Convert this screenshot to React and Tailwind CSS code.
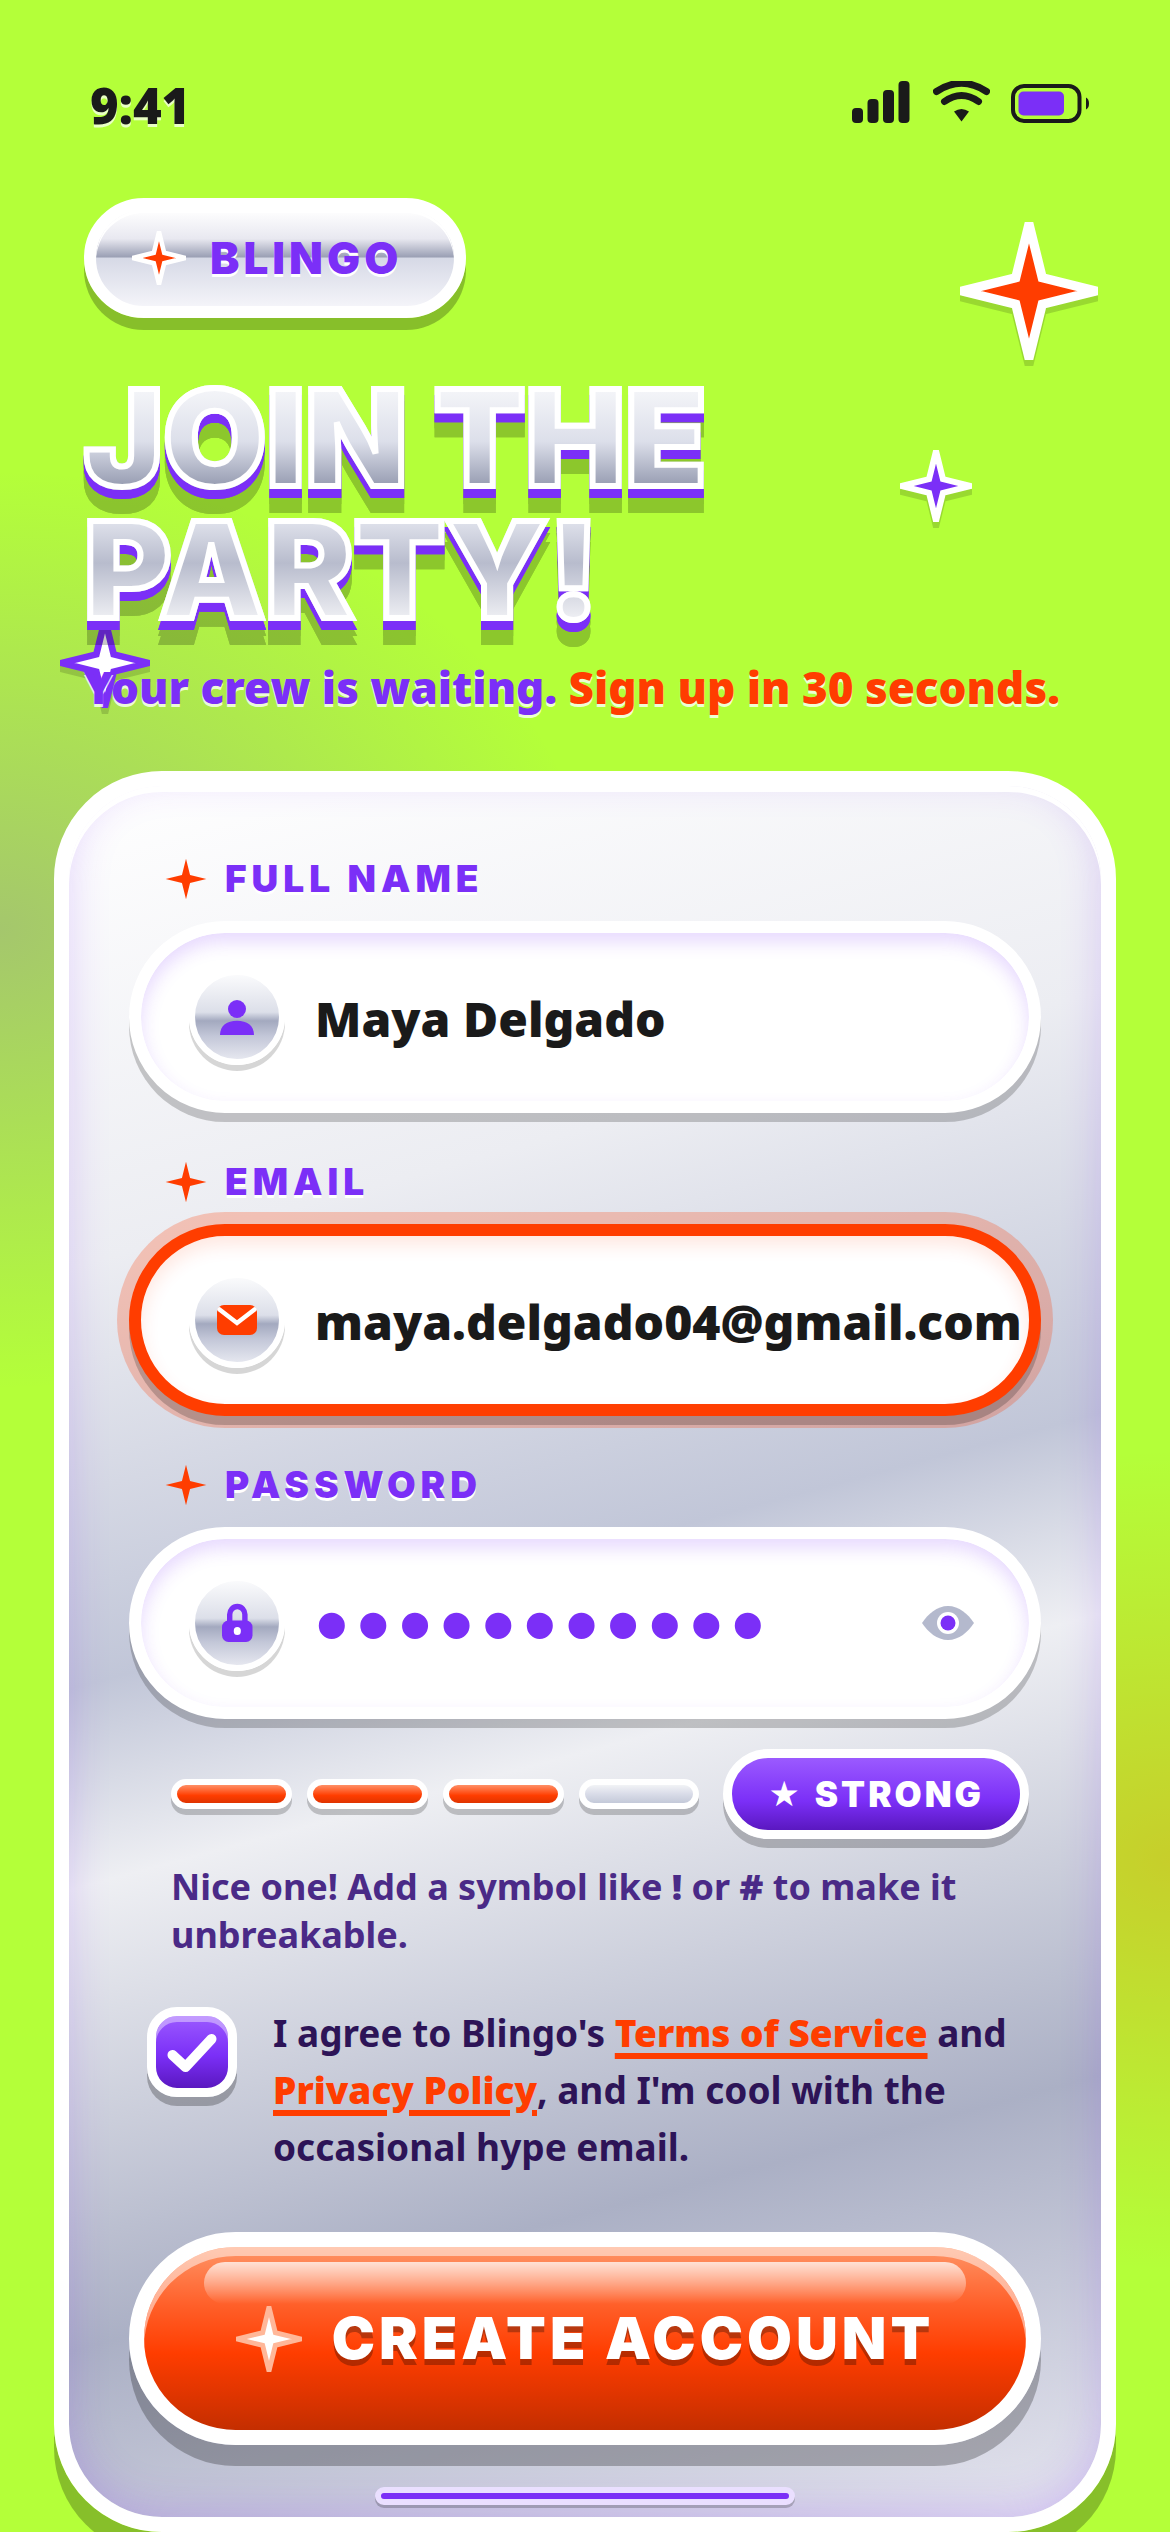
import React, { useState } from "react";

const STAR = "M50 1.5 L59.6 40.4 L98.5 50 L59.6 59.6 L50 98.5 L40.4 59.6 L1.5 50 L40.4 40.4 Z";

function Sparkle({ className, fill, stroke, strokeWidth = 0 }) {
  return (
    <svg viewBox="0 0 100 100" className={className} aria-hidden="true">
      <path
        d={STAR}
        fill={fill}
        stroke={stroke}
        strokeWidth={strokeWidth}
        strokeMiterlimit="10"
      />
    </svg>
  );
}

function StatusBar() {
  return (
    <div className="flex items-start justify-between pl-[90px] pr-[81px] pt-[69px]">
      <span className="text-[49px] leading-[72px] font-black text-[#1a1a1a] [text-shadow:0_3px_0_rgba(255,255,255,0.7)]">
        9:41
      </span>
      <div className="flex items-end gap-[21px] pt-3 text-[#1a1a1a]">
        <svg width="60" height="42" viewBox="0 0 60 42" fill="currentColor">
          <rect x="0" y="27" width="11" height="15" rx="4" />
          <rect x="15.5" y="18" width="11" height="24" rx="4" />
          <rect x="31" y="9" width="11" height="33" rx="4" />
          <rect x="46.5" y="0" width="11" height="42" rx="4" />
        </svg>
        <svg width="57" height="42" viewBox="0 0 57 42" fill="none">
          <g stroke="currentColor" strokeWidth="7" strokeLinecap="round">
            <path d="M3.5 10.5Q28.5-6 53.5 10.5" />
            <path d="M11.5 20.5Q28.5 8.5 45.5 20.5" />
          </g>
          <path
            d="M21 30.5Q28.5 25.5 36 30.5L28.5 40.5Z"
            fill="currentColor"
          />
        </svg>
        <svg width="78" height="39" viewBox="0 0 78 39" fill="none">
          <rect
            x="2"
            y="2"
            width="66.5"
            height="35"
            rx="11"
            stroke="currentColor"
            strokeWidth="4"
          />
          <rect x="7.5" y="7.5" width="45.5" height="24" rx="5" fill="#7b2ff7" />
          <path d="M75 13.5Q78 15 78 19.5T75 25.5Z" fill="currentColor" />
        </svg>
      </div>
    </div>
  );
}

function UserIcon() {
  return (
    <svg width="48" height="48" viewBox="0 0 48 48" fill="#7b2ff7">
      <circle cx="24" cy="16" r="9" />
      <path d="M7 42C7 32.5 14 27.7 24 27.7S41 32.5 41 42Z" />
    </svg>
  );
}

function MailIcon() {
  return (
    <svg width="48" height="48" viewBox="0 0 48 48" fill="none">
      <rect x="4" y="9" width="40" height="30" rx="7" fill="#ff3d00" />
      <path
        d="M6.5 13.5L24 27L41.5 13.5"
        stroke="#fff"
        strokeWidth="4.5"
        strokeLinecap="round"
      />
    </svg>
  );
}

function LockIcon() {
  return (
    <svg width="48" height="48" viewBox="0 0 48 48" fill="none">
      <path
        d="M16.7 23V15.5a7.6 8 0 0 1 15.2 0V23"
        stroke="#7b2ff7"
        strokeWidth="5.4"
      />
      <rect x="9" y="21.5" width="30.5" height="21.5" rx="6.5" fill="#7b2ff7" />
      <rect x="20.8" y="28" width="7" height="8" rx="3.5" fill="#fff" />
    </svg>
  );
}

function EyeIcon() {
  return (
    <svg width="66" height="66" viewBox="0 0 66 66">
      <path
        d="M7 33C13 24 22 16 33 16S53 24 59 33C53 42 44 50 33 50S13 42 7 33Z"
        fill="#b4b9cd"
      />
      <circle cx="33" cy="33" r="11" fill="#fff" />
      <circle cx="33" cy="33" r="7.5" fill="#7b2ff7" />
    </svg>
  );
}

function Field({ id, label, icon, active, children }) {
  return (
    <div>
      <label
        htmlFor={id}
        className="mb-[15px] ml-9 flex h-[54px] items-center gap-[18px] font-['Inter','Noto_Sans',sans-serif] text-[37px] leading-[54px] font-black tracking-[5px] text-[#7b2ff7] uppercase [text-shadow:0_3px_0_#fff]"
      >
        <Sparkle className="size-[42px]" fill="#ff3d00" />
        {label}
      </label>
      <div
        className={
          "flex h-48 items-center rounded-full border-12 bg-white pl-12 " +
          (active
            ? "border-[#ff3d00] shadow-[0_9px_0_rgba(0,0,0,0.2),0_0_0_12px_rgba(255,61,0,0.25),inset_0_9px_18px_rgba(255,61,0,0.12)]"
            : "border-white shadow-[0_9px_0_rgba(0,0,0,0.2),inset_0_9px_18px_rgba(123,47,247,0.18)]")
        }
      >
        <span className="mr-[30px] flex size-24 shrink-0 items-center justify-center rounded-full border-6 border-white bg-[linear-gradient(180deg,#fff_0%,#dcdfe9_45%,#a3a9bf_54%,#c3c7d8_70%,#eeeff5_100%)] bg-origin-border shadow-[0_6px_0_rgba(0,0,0,0.16)]">
          {icon}
        </span>
        {children}
      </div>
    </div>
  );
}

const inputClass =
  "min-w-0 flex-1 bg-transparent pt-1 text-[48px] leading-[72px] font-black text-[#1a1a1a] outline-none";

function StrengthBar({ on }) {
  return (
    <span
      className={
        "h-[30px] flex-1 rounded-full border-6 border-white bg-origin-border shadow-[0_6px_0_rgba(0,0,0,0.2)] " +
        (on
          ? "bg-[linear-gradient(180deg,#ff8f66_20%,#ff3d00_55%,#d93200_85%)]"
          : "bg-[linear-gradient(180deg,#f2f3f6_20%,#d9dce8_50%,#c0c6d6_85%)]")
      }
    />
  );
}

export default function App() {
  const [name, setName] = useState("Maya Delgado");
  const [email, setEmail] = useState("maya.delgado04@gmail.com");
  const [password, setPassword] = useState("partytime22");
  const [showPassword, setShowPassword] = useState(false);
  const [agreed, setAgreed] = useState(true);

  return (
    <div className="relative min-h-screen overflow-hidden bg-[#b4ff39] bg-[radial-gradient(600px_460px_at_0_930px,rgba(123,47,247,0.27),rgba(123,47,247,0)),radial-gradient(500px_410px_at_100%_1860px,rgba(255,61,0,0.25),rgba(255,61,0,0))] font-['Noto_Sans','Open_Sans',sans-serif]">
      {/* floating sparkles */}
      <Sparkle
        className="absolute top-[222px] right-[72px] size-[138px] drop-shadow-[0_6px_0_rgba(0,0,0,0.15)]"
        fill="#ff3d00"
        stroke="#fff"
        strokeWidth={6.7}
      />
      <Sparkle
        className="absolute top-[450px] right-[198px] size-[72px] drop-shadow-[0_6px_0_rgba(0,0,0,0.15)]"
        fill="#7b2ff7"
        stroke="#fff"
        strokeWidth={8.4}
      />
      <Sparkle
        className="absolute top-[618px] left-[60px] size-[90px] drop-shadow-[0_6px_0_rgba(0,0,0,0.15)]"
        fill="#fff"
        stroke="#7b2ff7"
        strokeWidth={7.4}
      />

      <StatusBar />

      <header className="relative px-[84px] pt-[57px]">
        <div className="inline-flex h-[120px] items-center gap-6 rounded-full border-12 border-white bg-[linear-gradient(180deg,#fff_0%,#e8e8f0_30%,#9a9fb4_49%,#d6d9e6_50%,#f4f4f9_100%)] pr-[52px] pl-9 align-top font-['Inter','Noto_Sans',sans-serif] text-[44px] font-black tracking-[4px] text-[#7b2ff7] shadow-[0_12px_0_rgba(0,0,0,0.25),inset_0_3px_0_#fff] [text-shadow:0_3px_0_#fff]">
          <Sparkle
            className="size-[54px]"
            fill="#ff3d00"
            stroke="#fff"
            strokeWidth={8.4}
          />
          BLINGO
        </div>
        <h1 className="mt-12 bg-[linear-gradient(180deg,#fff_0%,#dcdfea_28%,#9096ac_46%,#e8eaf2_54%,#b8bccd_73%,#fff_100%)] bg-clip-text pt-[6px] font-['Inter','Noto_Sans',sans-serif] text-[133px] leading-[132px] font-black text-transparent uppercase [-webkit-text-stroke:6px_#fff] [filter:drop-shadow(0_9px_0_#7b2ff7)_drop-shadow(0_15px_0_rgba(0,0,0,0.22))]">
          Join the
          <br />
          party!
        </h1>
        <p className="mt-[21px] text-[44px] leading-[60px] font-black whitespace-nowrap text-[#7b2ff7] [text-shadow:0_3px_0_rgba(255,255,255,0.8)]">
          Your crew is waiting.{" "}
          <span className="text-[#ff3d00]">Sign up in 30 seconds.</span>
        </p>
      </header>

      <form
        onSubmit={(e) => e.preventDefault()}
        className="relative mx-[54px] mt-[54px] rounded-[108px] border-15 border-white bg-[linear-gradient(165deg,#fff_0%,#ecedf2_24%,#c1c6d8_45%,#eeeff3_55%,#abb0c5_78%,#e6e6f0_100%)] px-[60px] pt-[66px] pb-[72px] shadow-[0_24px_0_rgba(0,0,0,0.25),inset_0_6px_0_#fff,inset_0_-9px_42px_rgba(123,47,247,0.2)]"
      >
        <div className="flex flex-col gap-[42px]">
          <Field id="name" label="Full name" icon={<UserIcon />}>
            <input
              id="name"
              type="text"
              value={name}
              onChange={(e) => setName(e.target.value)}
              className={inputClass}
            />
          </Field>
          <Field id="email" label="Email" icon={<MailIcon />} active>
            <input
              id="email"
              type="email"
              value={email}
              onChange={(e) => setEmail(e.target.value)}
              className={inputClass}
            />
          </Field>
          <Field id="password" label="Password" icon={<LockIcon />}>
            <input
              id="password"
              type={showPassword ? "text" : "password"}
              value={password}
              onChange={(e) => setPassword(e.target.value)}
              className="min-w-0 flex-1 bg-transparent pt-1 font-['Liberation_Sans',sans-serif] text-[96px] leading-[96px] tracking-[8px] text-[#7b2ff7] outline-none"
            />
            <button
              type="button"
              aria-label="Show password"
              onClick={() => setShowPassword(!showPassword)}
              className="mr-12 shrink-0"
            >
              <EyeIcon />
            </button>
          </Field>
        </div>

        {/* password strength */}
        <div className="mt-[30px] flex items-center gap-6 pr-3 pl-[42px]">
          <div className="flex flex-1 gap-[15px]">
            <StrengthBar on />
            <StrengthBar on />
            <StrengthBar on />
            <StrengthBar />
          </div>
          <div className="flex h-[90px] items-center gap-3 rounded-full border-9 border-white bg-[linear-gradient(180deg,#9b5aff_0%,#7b2ff7_60%,#5a18c0_100%)] px-9 font-['Inter','Noto_Sans',sans-serif] text-[35px] font-black tracking-[3px] text-white shadow-[0_9px_0_rgba(0,0,0,0.22)]">
            <span className="font-['DejaVu_Sans',sans-serif]">★</span>
            STRONG
          </div>
        </div>
        <p className="mt-6 pr-9 pl-[42px] text-[36px] leading-12 font-bold text-[#4a2a87]">
          Nice one! Add a symbol like <b className="font-black">!</b> or{" "}
          <b className="font-black">#</b> to make it unbreakable.
        </p>

        <div className="mt-[45px] flex gap-9 pl-[18px]">
          <div className="relative mt-[3px] size-[90px] shrink-0">
            <input
              id="agree"
              type="checkbox"
              checked={agreed}
              onChange={(e) => setAgreed(e.target.checked)}
              className="size-full appearance-none rounded-[30px] border-9 border-white bg-[linear-gradient(180deg,#9b5aff_0%,#7b2ff7_55%,#5a18c0_100%)] shadow-[0_9px_0_rgba(0,0,0,0.25),inset_0_6px_0_rgba(255,255,255,0.4)]"
            />
            {agreed && (
              <svg
                viewBox="0 0 90 90"
                fill="none"
                className="pointer-events-none absolute inset-0"
              >
                <path
                  d="M25.5 48L38.5 60L64.5 32"
                  stroke="#fff"
                  strokeWidth="10"
                  strokeLinecap="round"
                  strokeLinejoin="round"
                />
              </svg>
            )}
          </div>
          <label
            htmlFor="agree"
            className="text-[37px] leading-[57px] font-bold text-[#2d1457]"
          >
            I agree to Blingo's{" "}
            <a
              href="#terms"
              className="font-black text-[#ff3d00] underline decoration-6 underline-offset-6"
            >
              Terms of Service
            </a>{" "}
            and{" "}
            <a
              href="#privacy"
              className="font-black text-[#ff3d00] underline decoration-6 underline-offset-6"
            >
              Privacy Policy
            </a>
            , and I'm cool with the occasional hype email.
          </label>
        </div>

        <button
          type="submit"
          className="relative mt-[57px] flex h-[213px] w-full items-center justify-center gap-[30px] rounded-full border-15 border-white bg-[linear-gradient(180deg,#ff9466_0%,#ff5f29_32%,#ff3d00_58%,#c42e00_100%)] font-['Inter','Noto_Sans',sans-serif] text-[58px] font-black tracking-[4px] text-white shadow-[0_21px_0_rgba(0,0,0,0.25),inset_0_9px_0_rgba(255,255,255,0.5)] [text-shadow:0_6px_0_rgba(0,0,0,0.28)]"
        >
          <span className="absolute inset-x-[60px] top-[15px] h-[42px] rounded-full bg-linear-to-b from-white/75 to-white/0" />
          <Sparkle
            className="size-[66px]"
            fill="#fff"
            stroke="#ffb799"
            strokeWidth={7.4}
          />
          CREATE ACCOUNT
        </button>
      </form>

      {/* home indicator */}
      <div className="absolute bottom-[27px] left-1/2 h-[18px] w-[420px] -translate-x-1/2 rounded-full border-6 border-[#eadfff] bg-[#7b2ff7] shadow-[0_3px_0_rgba(0,0,0,0.2)]" />
    </div>
  );
}
